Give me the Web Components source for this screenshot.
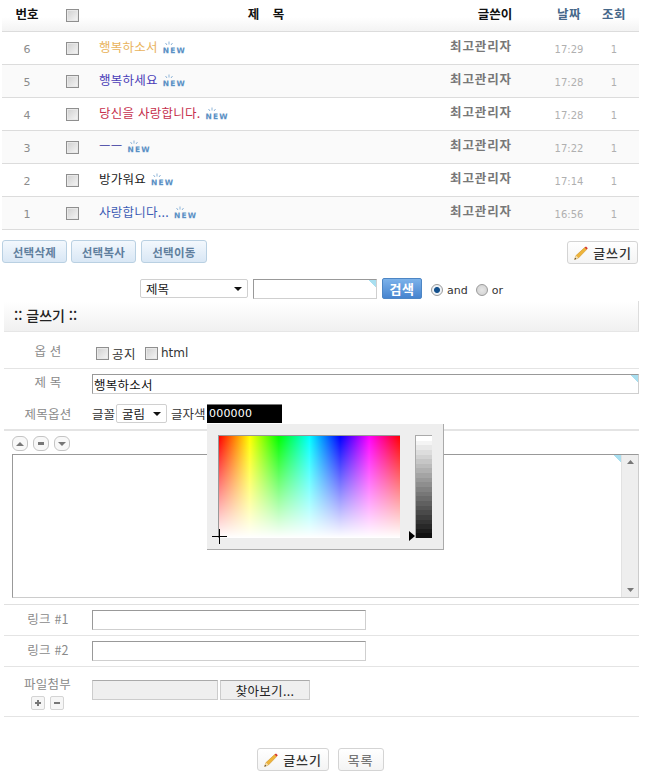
<!DOCTYPE html>
<html lang="ko">
<head>
<meta charset="utf-8">
<title>글쓰기</title>
<style>
    html, body { margin: 0; background: #fff; }
    body { font-family: "Noto Sans CJK KR", "Noto Sans", sans-serif; font-size: 12px; color: #333; overflow: hidden; }
    .page { width: 637px; padding-left: 2px; }
</style>
</head>
<body>
<div class="page">
    <board-list>
        <board-row num="6" color="#e9b35c" title="행복하소서" time="17:29"></board-row>
        <board-row num="5" color="#4a3db8" title="행복하세요" time="17:28" alt></board-row>
        <board-row num="4" color="#c6304c" title="당신을 사랑합니다." time="17:28"></board-row>
        <board-row num="3" color="#34349c" title="ㅡㅡ" time="17:22" alt></board-row>
        <board-row num="2" color="#222222" title="방가워요" time="17:14"></board-row>
        <board-row num="1" color="#3d5db5" title="사랑합니다..." time="16:56" alt></board-row>
    </board-list>
    <board-tools></board-tools>
    <search-bar></search-bar>
    <write-form></write-form>
</div>

<script>
const CHECK_CSS = `
    input[type=checkbox] {
        appearance: none;
        width: 13px;
        height: 13px;
        margin: 0;
        box-sizing: border-box;
        border: 1px solid #8f8f8f;
        background: linear-gradient(135deg, #cfcfcf, #f6f6f6);
        box-shadow: inset 0 0 0 1px #e8e8e8;
        display: block;
        flex: none;
    }
`;

const PENCIL = `
    <svg width="16" height="16" viewBox="0 0 16 16">
        <polygon points="1.5,14.5 3,10.6 11.6,2.6 13.6,4.6 5.4,13" fill="#eeb43a" stroke="#c98a1e" stroke-width=".5"/>
        <polygon points="1.5,14.5 3,10.6 5.4,13" fill="#f4dfb4"/>
        <polygon points="1.5,14.5 2.1,12.8 3.3,14" fill="#333"/>
        <polygon points="11.6,2.6 13,1.4 14.8,3.2 13.6,4.6" fill="#d8322c"/>
    </svg>`;

class NewBadge extends HTMLElement {
    constructor() {
        super();
        this.attachShadow({ mode: 'open' });
        this.shadowRoot.innerHTML = `
            <style>
                :host { display: inline-flex; flex-direction: column; width: 25px; height: 14px; }
                svg { display: block; margin-left: 1px; }
                span {
                    font: bold 7.5px/6px "DejaVu Sans", sans-serif;
                    letter-spacing: 1.2px;
                    color: #5b90c4;
                    text-shadow: 0 1px 0 #d8e6f3;
                }
            </style>
            <svg width="10" height="7" viewBox="0 0 10 7">
                <path d="M5 0.5v3M1.5 2l1.5 2M8.5 2L7 4" stroke="#8fb5d8" stroke-width="1" fill="none"/>
            </svg>
            <span>NEW</span>
        `;
    }
}
customElements.define('new-badge', NewBadge);

class BoardRow extends HTMLElement {
    constructor() {
        super();
        this.attachShadow({ mode: 'open' });
    }

    connectedCallback() {
        const get = (name) => this.getAttribute(name) || '';
        this.shadowRoot.innerHTML = `
            <style>
                :host {
                    display: grid;
                    grid-template-columns: 50px 40px 334px 110px 66px 24px;
                    height: 32px;
                    align-items: center;
                    border-bottom: 1px solid #dcdcdc;
                    background: ${this.hasAttribute('alt') ? '#fafafa' : '#fff'};
                }
                ${CHECK_CSS}
                .num { text-align: center; color: #8c8c8c; font: 11px "DejaVu Sans", sans-serif; padding-top: 2px; }
                .check { display: flex; justify-content: center; padding-left: 1px; padding-top: 1px; }
                .title { display: flex; align-items: center; gap: 5px; padding-left: 7px; }
                .title span { color: ${get('color')}; font-size: 12.5px; letter-spacing: .25px; padding-bottom: 3px; }
                .writer { text-align: center; font-weight: 700; color: #777; font-size: 12.5px; letter-spacing: .9px; padding-bottom: 5px; }
                .time, .hits { text-align: center; color: #b0b0b0; font: 10px "DejaVu Sans", sans-serif; padding-top: 3px; }
            </style>
            <div class="num">${get('num')}</div>
            <div class="check"><input type="checkbox"></div>
            <div class="title"><span>${get('title')}</span><new-badge></new-badge></div>
            <div class="writer">최고관리자</div>
            <div class="time">${get('time')}</div>
            <div class="hits">1</div>
        `;
    }
}
customElements.define('board-row', BoardRow);

class BoardList extends HTMLElement {
    constructor() {
        super();
        this.attachShadow({ mode: 'open' });
        this.shadowRoot.innerHTML = `
            <style>
                :host { display: block; }
                ${CHECK_CSS}
                .head {
                    display: grid;
                    grid-template-columns: 50px 40px 334px 110px 66px 24px;
                    height: 32px;
                    box-sizing: border-box;
                    align-items: center;
                    border-bottom: 1px solid #dcdcdc;
                    background: linear-gradient(#fff 55%, #f3f3f3);
                    font-weight: 700;
                    font-size: 12.5px;
                    color: #111;
                    text-align: center;
                }
                .head > div { padding-bottom: 5px; }
                .check { display: flex; justify-content: center; padding-left: 1px; padding-bottom: 0 !important; }
                .subject { padding-left: 14px; word-spacing: 10px; }
                .writer { padding-left: 28px; white-space: nowrap; }
                .blue { color: #46688a; font-weight: 700; letter-spacing: .4px; white-space: nowrap; }
            </style>
            <div class="head">
                <div>번호</div>
                <div class="check"><input type="checkbox"></div>
                <div class="subject">제 목</div>
                <div class="writer">글쓴이</div>
                <div class="blue">날짜</div>
                <div class="blue">조회</div>
            </div>
            <slot></slot>
        `;
    }
}
customElements.define('board-list', BoardList);

class ActionButton extends HTMLElement {
    constructor() {
        super();
        this.attachShadow({ mode: 'open' });
        this.shadowRoot.innerHTML = `
            <style>
                :host {
                    display: inline-flex;
                    align-items: center;
                    justify-content: center;
                    gap: 4px;
                    box-sizing: border-box;
                    height: 23px;
                    border: 1px solid #d4d4d4;
                    border-radius: 3px;
                    background: linear-gradient(#fff, #f4f4f4);
                    font-size: 13px;
                    font-weight: 500;
                    color: #333;
                    letter-spacing: .8px;
                }
                :host([tone=blue]) {
                    border-color: #b9d0e2;
                    background: linear-gradient(#f3f8fd, #d9e7f5);
                    color: #5f7f9e;
                    font-size: 11.5px;
                    font-weight: 700;
                    letter-spacing: .3px;
                    word-spacing: 0;
                }
                :host([tone=grey]) { color: #777; }
                svg { display: block; }
            </style>
            ${this.hasAttribute('pencil') ? PENCIL : ''}<slot></slot>
        `;
    }
}
customElements.define('action-button', ActionButton);

class BoardTools extends HTMLElement {
    constructor() {
        super();
        this.attachShadow({ mode: 'open' });
        this.shadowRoot.innerHTML = `
            <style>
                :host { display: flex; align-items: flex-start; gap: 4px; padding-top: 10px; height: 24px; }
                .del { width: 65px; }
                .copy { width: 65px; }
                .move { width: 66px; margin-left: 1px; }
                .write { width: 71px; margin-left: auto; margin-top: 1px; margin-right: 1px; }
            </style>
            <action-button class="del" tone="blue">선택삭제</action-button>
            <action-button class="copy" tone="blue">선택복사</action-button>
            <action-button class="move" tone="blue">선택이동</action-button>
            <action-button class="write" pencil>글쓰기</action-button>
        `;
    }
}
customElements.define('board-tools', BoardTools);

class DropSelect extends HTMLElement {
    constructor() {
        super();
        this.attachShadow({ mode: 'open' });
        this.shadowRoot.innerHTML = `
            <style>
                :host {
                    display: inline-flex;
                    align-items: center;
                    justify-content: space-between;
                    box-sizing: border-box;
                    height: 19px;
                    padding: 0 5px;
                    border: 1px solid #d0d0d0;
                    border-radius: 2px;
                    background: #fff;
                    font-size: 12.5px;
                    color: #222;
                }
                svg { display: block; }
            </style>
            <slot></slot>
            <svg width="8" height="4" viewBox="0 0 8 4"><polygon points="0,0 8,0 4,4" fill="#111"/></svg>
        `;
    }
}
customElements.define('drop-select', DropSelect);

class TextField extends HTMLElement {
    constructor() {
        super();
        this.attachShadow({ mode: 'open' });
    }

    connectedCallback() {
        const corner = this.hasAttribute('corner');
        this.shadowRoot.innerHTML = `
            <style>
                :host {
                    display: block;
                    box-sizing: border-box;
                    height: 20px;
                    border: 1px solid #cfcfcf;
                    border-top-color: #999;
                    border-left-color: #999;
                    background: ${corner ? 'linear-gradient(225deg, #a9dff0 0 5px, transparent 5px) no-repeat' : '#fff'};
                }
                input {
                    display: block;
                    box-sizing: border-box;
                    width: 100%;
                    height: 100%;
                    border: 0;
                    padding: 0 1px;
                    outline: 0;
                    background: transparent;
                    font: 12.5px "Noto Sans CJK KR", sans-serif;
                    letter-spacing: .25px;
                    color: #111;
                }
            </style>
            <input type="text" value="${this.getAttribute('value') || ''}">
        `;
    }
}
customElements.define('text-field', TextField);

class SearchBar extends HTMLElement {
    constructor() {
        super();
        this.attachShadow({ mode: 'open' });
        this.shadowRoot.innerHTML = `
            <style>
                :host {
                    display: flex;
                    align-items: center;
                    height: 21px;
                    padding: 14px 0 2px 138px;
                    font: 11px "DejaVu Sans", sans-serif;
                    color: #333;
                }
                drop-select { width: 108px; margin-right: 5px; font-family: "Noto Sans CJK KR", sans-serif; }
                text-field { width: 124px; margin-right: 5px; }
                button {
                    box-sizing: border-box;
                    width: 40px;
                    height: 21px;
                    padding: 0;
                    border: 1px solid #4d86c4;
                    border-radius: 2px;
                    background: linear-gradient(#7cb2ea, #4684cf);
                    color: #fff;
                    font: 700 13px "Noto Sans CJK KR", sans-serif;
                    letter-spacing: .5px;
                }
                .radio {
                    box-sizing: border-box;
                    width: 12px;
                    height: 12px;
                    margin: 2px 4px 0 0;
                    border-radius: 50%;
                    border: 1px solid #9a9a9a;
                    background: radial-gradient(circle, #e6e6e6, #cfcfcf);
                    flex: none;
                }
                .radio.on { background: radial-gradient(circle, #14508c 0 2.5px, #eef2f6 3.5px); margin-left: 9px; }
                .or { margin-left: 8px; }
                .word { padding-top: 3px; }
            </style>
            <drop-select>제목</drop-select>
            <text-field corner></text-field>
            <button>검색</button>
            <span class="radio on"></span><span class="word">and</span>
            <span class="radio or"></span><span class="word">or</span>
        `;
    }
}
customElements.define('search-bar', SearchBar);

class FormRow extends HTMLElement {
    constructor() {
        super();
        this.attachShadow({ mode: 'open' });
        this.shadowRoot.innerHTML = `
            <style>
                :host {
                    display: grid;
                    grid-template-columns: 88px 1fr;
                    align-items: center;
                    box-sizing: border-box;
                    border-bottom: 1px solid #e4e4e4;
                }
                :host([plain]) { border-bottom: 0; }
                :host([thick]) { border-bottom-width: 2px; }
                .label { text-align: center; color: #8a8a8a; font-size: 12.5px; letter-spacing: .2px; }
            </style>
            <div class="label"><slot name="label"></slot></div>
            <div><slot></slot></div>
        `;
    }
}
customElements.define('form-row', FormRow);

class ColorPicker extends HTMLElement {
    constructor() {
        super();
        this.attachShadow({ mode: 'open' });
        const bands = [];
        for (let i = 0; i < 22; i++) {
            const v = Math.round(255 - (i / 21) * 238);
            bands.push(`<i style="background:rgb(${v},${v},${v})"></i>`);
        }
        this.shadowRoot.innerHTML = `
            <style>
                :host {
                    position: absolute;
                    top: 20px;
                    left: 0;
                    z-index: 2;
                    display: flex;
                    box-sizing: border-box;
                    width: 237px;
                    height: 126px;
                    padding: 11px 0 0 11px;
                    background: #eee;
                    border-right: 1px solid #aaa;
                    border-bottom: 1px solid #aaa;
                }
                .field {
                    position: relative;
                    box-sizing: border-box;
                    width: 182px;
                    height: 103px;
                    border-top: 1px solid #999;
                    border-left: 1px solid #999;
                    background:
                        linear-gradient(rgba(255,255,255,0), #fff),
                        linear-gradient(90deg, #f00, #ff0 17%, #0f0 33%, #0ff 50%, #00f 67%, #f0f 83%, #f00);
                }
                .cross { position: absolute; left: -7px; top: 93px; display: block; }
                .arrow { display: block; margin: 96px 0 0 9px; }
                .bar {
                    box-sizing: border-box;
                    width: 17px;
                    height: 103px;
                    border-top: 1px solid #aaa;
                    border-left: 1px solid #aaa;
                    display: flex;
                    flex-direction: column;
                }
                .bar i { flex: 1; display: block; }
            </style>
            <div class="field">
                <svg class="cross" width="15" height="15" viewBox="0 0 15 15">
                    <path d="M0 7.5h15M7.5 0v15" stroke="#000" stroke-width="1"/>
                </svg>
            </div>
            <svg class="arrow" width="6" height="10" viewBox="0 0 6 10"><polygon points="0,0 6,5 0,10" fill="#000"/></svg>
            <div class="bar">${bands.join('')}</div>
        `;
    }
}
customElements.define('color-picker', ColorPicker);

class WriteForm extends HTMLElement {
    constructor() {
        super();
        this.attachShadow({ mode: 'open' });
        this.shadowRoot.innerHTML = `
            <style>
                :host { display: block; margin-left: 2px; }
                ${CHECK_CSS}
                .head {
                    box-sizing: border-box;
                    height: 31px;
                    padding: 0 0 3px 10px;
                    display: flex;
                    align-items: center;
                    font-size: 14px;
                    font-weight: 500;
                    color: #222;
                    background: linear-gradient(#fff, #f0f0f0);
                    border-bottom: 1px solid #e6e6e6;
                    border-right: 1px solid #ddd;
                }
                .inline { display: flex; align-items: center; position: relative; color: #333; font-size: 12.5px; }
                .options { gap: 3px; padding: 6px 0 0 4px; }
                .options .gap { margin-left: 6px; }
                .options .notice { width: 24px; white-space: nowrap; letter-spacing: .4px; }
                .html { font: 12px "DejaVu Sans", sans-serif; }
                .opt-row { height: 37px; }
                .title-row { height: 31px; align-items: start; padding-top: 5px; }
                .title-row .up { display: block; margin-top: -2px; }
                .title-opt { height: 31px; padding-bottom: 2px; }
                .title-opt .up { display: block; margin-top: -1px; }
                .word { display: block; flex: none; white-space: nowrap; }
                .font-word { width: 24px; }
                .color-word { width: 36px; }
                .font-pick { width: 51px; margin-right: 4px; }
                .color-wrap { position: relative; }
                .color-box {
                    box-sizing: border-box;
                    width: 75px;
                    height: 19px;
                    padding: 0 2px;
                    border-top: 1px solid #777;
                    background: #000;
                    color: #fff;
                    font: 11px/18px "DejaVu Sans", sans-serif;
                    letter-spacing: .2px;
                }
                .editor {
                    box-sizing: border-box;
                    height: 174px;
                    padding: 5px 0 0 8px;
                    border-bottom: 1px solid #e0e0e0;
                }
                .sizers { display: flex; gap: 5px; height: 16px; margin-bottom: 2px; }
                .sizer {
                    box-sizing: border-box;
                    width: 16px;
                    height: 15px;
                    border: 1px solid #c4c4c4;
                    border-radius: 6px;
                    background: #f8f8f8;
                    display: flex;
                    align-items: center;
                    justify-content: center;
                }
                .area {
                    box-sizing: border-box;
                    height: 144px;
                    display: flex;
                    justify-content: flex-end;
                    border: 1px solid #ccc;
                    border-top-color: #999;
                    border-left-color: #999;
                }
                .tri { width: 8px; height: 8px; background: linear-gradient(225deg, #a9dff0 0 5.5px, transparent 5.5px); }
                .scroll {
                    width: 16px;
                    background: #eee;
                    border-left: 1px solid #e2e2e2;
                    display: flex;
                    flex-direction: column;
                    justify-content: space-between;
                    align-items: center;
                    padding: 5px 0;
                }
                .scroll svg { display: block; }
                .link-row { height: 31px; }
                .link-row .up { display: block; margin-top: -3px; }
                .file-row { height: 50px; }
                .file-row .label-wrap { display: flex; flex-direction: column; align-items: center; gap: 3px; padding: 1px 1px 0 0; }
                .pm { display: flex; gap: 5px; }
                .pm span {
                    box-sizing: border-box;
                    width: 14px;
                    height: 14px;
                    border: 1px solid #d4d4d4;
                    border-radius: 2px;
                    background: #f6f6f6;
                    display: flex;
                    align-items: center;
                    justify-content: center;
                }
                .file { display: flex; gap: 2px; padding-bottom: 4px; }
                .file-name {
                    box-sizing: border-box;
                    width: 126px;
                    height: 20px;
                    background: #efefef;
                    border: 1px solid #ccc;
                    border-top-color: #aaa;
                }
                .file-btn {
                    box-sizing: border-box;
                    width: 90px;
                    height: 20px;
                    background: #efefef;
                    border: 1px solid #ccc;
                    border-top-color: #aaa;
                    text-align: center;
                    line-height: 19px;
                    color: #222;
                    font-size: 12.5px;
                    letter-spacing: .3px;
                }
                .actions { display: flex; justify-content: center; gap: 9px; padding: 31px 0 0 0; margin-left: -3px; }
                .ok { width: 72px; }
                .list { width: 46px; }
            </style>
            <div class="head">:: 글쓰기 ::</div>

            <form-row class="opt-row">
                <span slot="label">옵 션</span>
                <div class="inline options">
                    <input type="checkbox"><span class="notice">공지</span>
                    <input class="gap" type="checkbox"><span class="html">html</span>
                </div>
            </form-row>

            <form-row class="title-row" plain>
                <span slot="label" class="up">제 목</span>
                <text-field corner value="행복하소서"></text-field>
            </form-row>

            <form-row class="title-opt" thick>
                <span slot="label" class="up">제목옵션</span>
                <div class="inline">
                    <span class="word font-word">글꼴</span>
                    <drop-select class="font-pick">굴림</drop-select>
                    <span class="word color-word">글자색</span>
                    <div class="color-wrap">
                        <div class="color-box">000000</div>
                        <color-picker></color-picker>
                    </div>
                </div>
            </form-row>

            <div class="editor">
                <div class="sizers">
                    <div class="sizer"><svg width="8" height="4"><polygon points="0,4 8,4 4,0" fill="#777"/></svg></div>
                    <div class="sizer"><svg width="6" height="3"><rect width="6" height="3" fill="#777"/></svg></div>
                    <div class="sizer"><svg width="8" height="4"><polygon points="0,0 8,0 4,4" fill="#777"/></svg></div>
                </div>
                <div class="area">
                    <div class="tri"></div>
                    <div class="scroll">
                        <svg width="7" height="4"><polygon points="0,4 7,4 3.5,0" fill="#777"/></svg>
                        <svg width="7" height="4"><polygon points="0,0 7,0 3.5,4" fill="#777"/></svg>
                    </div>
                </div>
            </div>

            <form-row class="link-row">
                <span slot="label" class="up">링크 #1</span>
                <text-field style="width:274px"></text-field>
            </form-row>
            <form-row class="link-row">
                <span slot="label" class="up">링크 #2</span>
                <text-field style="width:274px"></text-field>
            </form-row>

            <form-row class="file-row">
                <div slot="label" class="label-wrap">
                    <span>파일첨부</span>
                    <div class="pm">
                        <span><svg width="8" height="8"><path d="M4 1v6M1 4h6" stroke="#777" stroke-width="2"/></svg></span>
                        <span><svg width="8" height="8"><path d="M1 4h6" stroke="#777" stroke-width="2"/></svg></span>
                    </div>
                </div>
                <div class="file">
                    <div class="file-name"></div>
                    <div class="file-btn">찾아보기...</div>
                </div>
            </form-row>

            <div class="actions">
                <action-button class="ok" pencil>글쓰기</action-button>
                <action-button class="list" tone="grey">목록</action-button>
            </div>
        `;
    }
}
customElements.define('write-form', WriteForm);
</script>
</body>
</html>
